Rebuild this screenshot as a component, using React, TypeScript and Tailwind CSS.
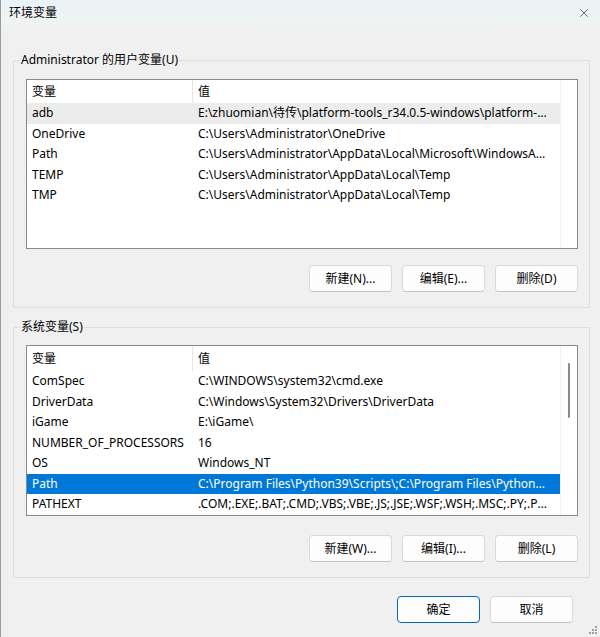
import { X } from "lucide-react";

type Row = { name: string; value: string };

const USER_VARS: Row[] = [
  { name: "adb", value: "E:\\zhuomian\\待传\\platform-tools_r34.0.5-windows\\platform-tools" },
  { name: "OneDrive", value: "C:\\Users\\Administrator\\OneDrive" },
  { name: "Path", value: "C:\\Users\\Administrator\\AppData\\Local\\Microsoft\\WindowsApps;" },
  { name: "TEMP", value: "C:\\Users\\Administrator\\AppData\\Local\\Temp" },
  { name: "TMP", value: "C:\\Users\\Administrator\\AppData\\Local\\Temp" },
];

const SYSTEM_VARS: Row[] = [
  { name: "ComSpec", value: "C:\\WINDOWS\\system32\\cmd.exe" },
  { name: "DriverData", value: "C:\\Windows\\System32\\Drivers\\DriverData" },
  { name: "iGame", value: "E:\\iGame\\" },
  { name: "NUMBER_OF_PROCESSORS", value: "16" },
  { name: "OS", value: "Windows_NT" },
  { name: "Path", value: "C:\\Program Files\\Python39\\Scripts\\;C:\\Program Files\\Python39\\" },
  { name: "PATHEXT", value: ".COM;.EXE;.BAT;.CMD;.VBS;.VBE;.JS;.JSE;.WSF;.WSH;.MSC;.PY;.PYW" },
];

function Btn({ label, primary }: { label: string; primary?: boolean }) {
  return (
    <button
      className={`h-[27px] w-[83px] rounded-[4px] bg-[#fdfdfd] text-[12px] text-black border ${
        primary ? "border-[#0067c0]" : "border-[#d9d9d9] border-b-[#c4c4c4]"
      }`}
    >
      {label}
    </button>
  );
}

function VarList({
  rows,
  hover,
  selected,
  scroll,
  height,
  headerH,
}: {
  rows: Row[];
  hover?: number;
  selected?: number;
  scroll?: boolean;
  height: string;
  headerH: string;
}) {
  return (
    <div className={`${height} border border-[#8a8a8a] bg-white flex overflow-hidden`}>
      <div className="flex-1 min-w-0">
        {/* header */}
        <div className={`${headerH} flex items-center`}>
          <div className="w-[166px] shrink-0 pl-[5px] h-full flex items-center border-r border-[#e5e5e5]">变量</div>
          <div className="flex-1 pl-[5px]">值</div>
        </div>
        {rows.map((r, i) => {
          const isSel = i === selected;
          const isHover = i === hover;
          return (
            <div
              key={r.name + i}
              className={`h-[20.5px] flex items-center ${
                isSel ? "bg-[#0078d7] text-white" : isHover ? "bg-[#ececec]" : ""
              }`}
            >
              <div className="w-[166px] shrink-0 pl-[5px] whitespace-nowrap">{r.name}</div>
              <div className="flex-1 min-w-0 pl-[5px] pr-[10px] whitespace-nowrap overflow-hidden text-ellipsis">
                {r.value}
              </div>
            </div>
          );
        })}
      </div>
      {/* scrollbar gutter */}
      <div className="w-[17px] shrink-0 border-l border-[#f0f0f0] flex justify-center">
        {scroll && <div className="mt-[17px] w-[2px] h-[55px] bg-[#8a8a8a] rounded-full" />}
      </div>
    </div>
  );
}

export default function App() {
  return (
    <div
      className="w-[600px] h-[637px] bg-[#f0f0f0] flex flex-col relative text-[12px] text-black border-l border-[#9a9a9a]"
      style={{ fontFamily: '"Noto Sans", "Noto Sans CJK SC", sans-serif' }}
    >
      {/* title bar */}
      <div className="h-[25px] flex items-center justify-between pl-[8px] pr-[9px] bg-gradient-to-b from-[#e9f3f6] to-[#f1f3f3]">
        <span className="text-[12px]">环境变量</span>
        <X className="w-[14px] h-[14px] text-[#333]" strokeWidth={1.2} />
      </div>

      <div className="pl-[12px] pr-[10px] pt-[27px]">
        {/* user variables */}
        <fieldset className="min-w-0 border border-[#dcdcdc] rounded-[2px]">
          <legend className="ml-[6px] px-[1px] leading-[16px]">Administrator 的用户变量(U)</legend>
          <div className="pl-[12px] pr-[11px] pb-[15px] pt-[11px]">
            <VarList rows={USER_VARS} hover={0} height="h-[170px]" headerH="h-[23px]" />
            <div className="mt-[16px] flex justify-end gap-[10px]">
              <Btn label="新建(N)..." />
              <Btn label="编辑(E)..." />
              <Btn label="删除(D)" />
            </div>
          </div>
        </fieldset>

        {/* system variables */}
        <fieldset className="min-w-0 mt-[11px] border border-[#dcdcdc] rounded-[2px]">
          <legend className="ml-[6px] px-[1px] leading-[16px]">系统变量(S)</legend>
          <div className="pl-[12px] pr-[11px] pb-[15px] pt-[10px]">
            <VarList rows={SYSTEM_VARS} selected={5} scroll height="h-[171px]" headerH="h-[25px]" />
            <div className="mt-[19px] flex justify-end gap-[10px]">
              <Btn label="新建(W)..." />
              <Btn label="编辑(I)..." />
              <Btn label="删除(L)" />
            </div>
          </div>
        </fieldset>
      </div>

      {/* footer */}
      <div className="mt-[18px] flex justify-end gap-[10px] pr-[27px]">
        <Btn label="确定" primary />
        <Btn label="取消" />
      </div>

      {/* resize grip */}
      <div className="absolute right-[3px] bottom-[3px] grid grid-cols-3 gap-[1px]">
        <span />
        <span />
        <span className="w-[2px] h-[2px] bg-[#a0a0a0]" />
        <span />
        <span className="w-[2px] h-[2px] bg-[#a0a0a0]" />
        <span className="w-[2px] h-[2px] bg-[#a0a0a0]" />
        <span className="w-[2px] h-[2px] bg-[#a0a0a0]" />
        <span className="w-[2px] h-[2px] bg-[#a0a0a0]" />
        <span className="w-[2px] h-[2px] bg-[#a0a0a0]" />
      </div>
    </div>
  );
}
